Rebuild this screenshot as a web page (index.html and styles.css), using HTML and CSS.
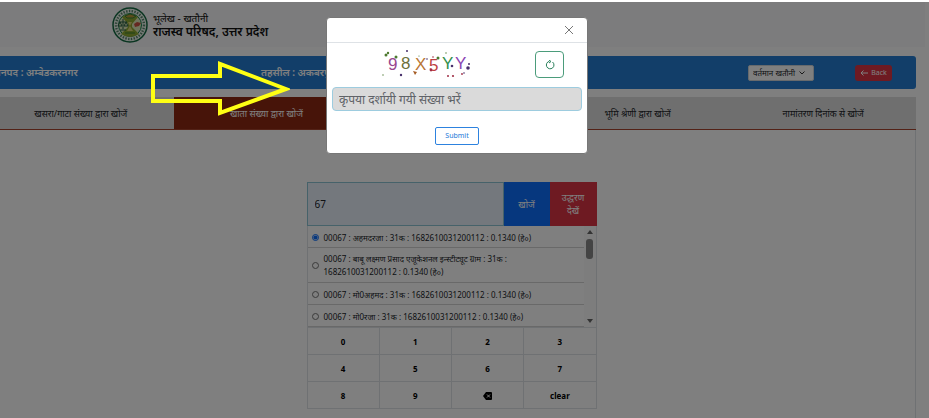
FILE: index.html
```html
<!DOCTYPE html>
<html lang="hi">
<head>
<meta charset="utf-8">
<meta name="viewport" content="width=device-width, initial-scale=1">
<title>भूलेख - खतौनी</title>
<link rel="stylesheet" href="styles.css">
</head>
<body>
<header class="site-header">
  <svg class="emblem" viewBox="0 0 36 36" aria-hidden="true">
    <circle cx="18" cy="18" r="17" fill="#eef5ee" stroke="#146a42" stroke-width="1.5"/>
    <circle cx="18" cy="18" r="14" fill="none" stroke="#55876a" stroke-width="2.4" stroke-dasharray="1.4 1.4"/>
    <circle cx="18" cy="18" r="11.5" fill="#dfe9b8" stroke="#168052"/>
    <path d="M10 10Q18 4 26 10L20 17V20L27 27Q18 33 9 27L16 20V17Z" fill="#8faa32"/>
    <path d="M13 9L18 7L24 9L21 11H15ZM13 26H23" fill="#bb9938" stroke="#3d8135"/>
    <path d="M7 15H15M11 12V22M8 15L6 19H10ZM14 15L12 19H16ZM8 23H14" fill="none" stroke="#255d42"/>
    <path d="M22 17L25 15L29 16L27 19L23 20Z" fill="#cc5143"/>
    <path d="M16 15H20L18 19L21 24H15L18 19Z" fill="#ded578"/>
  </svg>
  <div>
    <p class="site-name">भूलेख - खतौनी</p>
    <h1 class="site-title">राजस्व परिषद, उत्तर प्रदेश</h1>
  </div>
</header>
<main class="page">
  <div class="location-bar">
    <span class="place">जनपद : अम्बेडकरनगर</span>
    <span class="place">तहसील : अकबरपुर</span>
    <div class="bar-cell">
      <select class="version" aria-label="खतौनी"><option>वर्तमान खतौनी</option></select>
    </div>
    <button class="back" type="button">
      <svg class="back-icon" viewBox="0 0 8 8" aria-hidden="true"><path d="M8 4H1M3.5 1.5L1 4L3.5 6.5"/></svg>Back
    </button>
  </div>
  <nav class="tabs">
    <a class="tab" href="#">खसरा/गाटा संख्या द्वारा खोजें</a>
    <a class="tab active" href="#">खाता संख्या द्वारा खोजें</a>
    <a class="tab" href="#">खातेदार के नाम द्वारा खोजें</a>
    <a class="tab" href="#">भूमि श्रेणी द्वारा खोजें</a>
    <a class="tab" href="#">नामांतरण दिनांक से खोजें</a>
  </nav>
  <section class="panel">
    <div class="finder">
      <div class="search">
        <input class="number" type="text" value="67" aria-label="खाता संख्या">
        <button class="find" type="button">खोजें</button>
        <button class="extract" type="button">उद्धरण देखें</button>
      </div>
      <div class="results">
        <div class="options">
          <label class="option"><input type="radio" name="khata" checked><span>00067 : अहमदरजा : 31क : 1682610031200112 : 0.1340 (हे०)</span></label>
          <label class="option"><input type="radio" name="khata"><span>00067 : बाबू लक्ष्मण प्रसाद एजूकेशनल इन्स्टीट्यूट ग्राम : 31क : 1682610031200112 : 0.1340 (हे०)</span></label>
          <label class="option"><input type="radio" name="khata"><span>00067 : मो0अहमद : 31क : 1682610031200112 : 0.1340 (हे०)</span></label>
          <label class="option"><input type="radio" name="khata"><span>00067 : मो0रजा : 31क : 1682610031200112 : 0.1340 (हे०)</span></label>
        </div>
        <div class="scrollbar" aria-hidden="true"><i class="up"></i><i class="thumb"></i><i class="down"></i></div>
      </div>
      <div class="keypad">
        <button type="button">0</button><button type="button">1</button><button type="button">2</button><button type="button">3</button>
        <button type="button">4</button><button type="button">5</button><button type="button">6</button><button type="button">7</button>
        <button type="button">8</button><button type="button">9</button>
        <button type="button" aria-label="backspace"><svg class="erase" viewBox="0 0 9 8" aria-hidden="true"><path d="M3 0H8Q9 0 9 1V7Q9 8 8 8H3L0 4Z"/><path class="cross" d="M4 2.5L7 5.5M7 2.5L4 5.5"/></svg></button>
        <button type="button">clear</button>
      </div>
    </div>
  </section>
</main>
<div class="backdrop">
  <form class="modal" role="dialog" aria-label="Captcha">
    <div class="modal-head">
      <button class="close" type="button" aria-label="Close"><svg viewBox="0 0 10 10"><path d="M1 1L9 9M9 1L1 9"/></svg></button>
    </div>
    <div class="modal-body">
      <div class="captcha-row">
        <svg class="captcha" viewBox="0 0 90 30" role="img" aria-label="98X5YY">
          <g class="glyphs">
            <text x="6" y="21" fill="#98478f">9</text><text x="19" y="20" fill="#6d713b">8</text><text x="33" y="21" fill="#ba7634">X</text><text x="47" y="22" fill="#bd3f42">5</text><text x="60" y="20" fill="#34914d">Y</text><text x="73" y="20" fill="#8b45b4">Y</text>
          </g>
          <g fill="#4d792f"><circle cx="4" cy="6" r="1.5"/><circle cx="6" cy="4" r="1.2"/><circle cx="14" cy="8" r="1.5"/><circle cx="56" cy="9" r="1.5"/><circle cx="64" cy="4" r=".7"/><circle cx="1" cy="26" r=".7"/><circle cx="37" cy="7" r=".6"/></g>
          <g fill="#47306b"><circle cx="25" cy="2" r="1"/><circle cx="19" cy="26" r="1.2"/><circle cx="70" cy="17" r="1.3"/><circle cx="87" cy="15" r="1"/><circle cx="86" cy="19" r="1.8"/><circle cx="82" cy="24" r=".8"/><circle cx="45" cy="10" r=".8"/></g>
          <g fill="#a02f46"><circle cx="49" cy="21" r="1.4"/><circle cx="66" cy="27" r="1"/><circle cx="71" cy="27" r="1.1"/><circle cx="80" cy="25" r=".9"/><circle cx="51" cy="8" r=".8"/></g>
          <path d="M31 22L35 23L33 26Z" fill="#a55c24"/>
        </svg>
        <button class="refresh" type="button" aria-label="Refresh"><svg viewBox="0 0 10 10"><path d="M7.500 2A3.800 3.800 0 1 1 4.300 1.300M4 0L6 1.500L4 3"/></svg></button>
      </div>
      <input class="answer" type="text" placeholder="कृपया दर्शायी गयी संख्या भरें" aria-label="कृपया दर्शायी गयी संख्या भरें">
      <button class="submit" type="button">Submit</button>
    </div>
  </form>
</div>
<svg class="pointer" viewBox="0 0 140 56" aria-hidden="true"><path d="M3 15H70V3L136 28L70 52V40H3Z"/></svg>
</body>
</html>
```
FILE: styles.css
```css
* { box-sizing: border-box; }
body {
  margin: 0;
  padding-top: 2px;
  min-height: 100vh;
  display: flex;
  flex-direction: column;
  overflow: hidden;
  background: #fff;
  color: #212529;
  font: 9px/13px "Noto Sans", "Noto Sans Devanagari", sans-serif;
}
button, input, select { font: inherit; color: inherit; margin: 0; }
button { padding: 0; }
.site-header {
  display: flex;
  align-items: center;
  gap: 5px;
  height: 45px;
  margin-right: 4px;
  padding-left: 112px;
  background: #f8f8fa;
}
.emblem { width: 36px; height: 36px; }
.site-name, .site-title { margin: 0; color: #111; font-size: 10px; line-height: 13px; }
.site-title { font-size: 12px; font-weight: 600; }
.page {
  flex: 1;
  display: flex;
  flex-direction: column;
  margin: 9px 13px 0 -12px;
}
.location-bar {
  display: grid;
  grid-template-columns: 268px 1fr 107px 61px;
  align-items: center;
  height: 33px;
  padding-left: 5px;
  border-radius: 3px;
  background: #247dd2;
  color: #fff;
}
.place { font-size: 10px; font-weight: 600; }
.version {
  display: block;
  width: 66px;
  height: 16px;
  padding: 0 4px;
  border: 1px solid #ced4da;
  border-radius: 2px;
  appearance: none;
  background: #fff url("data:image/svg+xml,%3Csvg xmlns='http://www.w3.org/2000/svg' viewBox='0 0 6 4'%3E%3Cpath d='M.5.5L3 3L5.500.5' fill='none' stroke='%23333'/%3E%3C/svg%3E") right 8px center / 6px 4px no-repeat;
  color: #212529;
  font-size: 8px;
}
.back {
  display: flex;
  align-items: center;
  justify-content: center;
  justify-self: start;
  gap: 3px;
  width: 37px;
  height: 16px;
  border: 0;
  border-radius: 3px;
  background: #dc3545;
  font-size: 7px;
}
.back-icon { width: 8px; height: 8px; fill: none; stroke: #fff; }
.tabs {
  display: grid;
  grid-template-columns: repeat(5, 1fr);
  height: 33px;
  margin-top: 8px;
  border-bottom: 1px solid #a7452e;
  background: #dedede;
}
.tab {
  display: flex;
  align-items: center;
  justify-content: center;
  color: #212529;
  text-decoration: none;
  white-space: nowrap;
}
.tab.active { background: #8f2812; color: #fff; }
.panel {
  flex: 1;
  display: flex;
  justify-content: center;
  align-items: flex-start;
  padding: 52px 0 10px;
  border-right: 1px solid #dee2e6;
}
.finder { width: 290px; }
.search { display: grid; grid-template-columns: 1fr 46px 47px; height: 44px; }
.number {
  min-width: 0;
  padding: 0 7px;
  border: 1px solid #8cc4d4;
  background: #e8f0fa;
  font-size: 10px;
}
.find, .extract { border: 0; background: #0d6efd; color: #fff; }
.extract { padding: 0 8px; background: #dc3545; }
.results {
  display: flex;
  height: 101px;
  border: solid #dee2e6;
  border-width: 0 1px;
}
.options { flex: 1; min-width: 0; font-size: 8px; }
.option {
  display: flex;
  align-items: center;
  gap: 5px;
  min-height: 22px;
  padding: 4px 46px 3px 4px;
  border-bottom: 1px solid #d3d3d3;
}
.option:nth-child(2) { padding-bottom: 4px; }
.option input { flex: none; width: 7px; height: 7px; accent-color: #0d6efd; }
.scrollbar {
  display: flex;
  flex-direction: column;
  align-items: center;
  width: 12px;
  padding: 4px 0;
  background: #fafafa;
}
.up, .down { border: solid transparent; border-width: 0 3px; }
.up { border-bottom: 4px solid #666; }
.down { margin-top: auto; border-top: 4px solid #666; }
.thumb { width: 7px; height: 20px; margin-top: 5px; border-radius: 3px; background: #888; }
.keypad {
  display: grid;
  grid-template-columns: repeat(4, 1fr);
  border: solid #dee2e6;
  border-width: 1px 0 0 1px;
}
.keypad button {
  height: 27px;
  border: solid #dee2e6;
  border-width: 0 1px 1px 0;
  background: #fff;
  color: #000;
  font-size: 8px;
  font-weight: 700;
}
.erase { width: 9px; height: 8px; vertical-align: middle; }
.erase .cross { stroke: #fff; }
.backdrop {
  position: fixed;
  inset: 2px 0 0;
  display: flex;
  justify-content: center;
  align-items: flex-start;
  padding: 15px 15px 0 0;
  background: rgba(0, 0, 0, .5);
}
.modal {
  width: 262px;
  border: 1px solid #777;
  border-radius: 4px;
  background: #fff;
}
.modal-head {
  display: flex;
  justify-content: flex-end;
  align-items: center;
  height: 25px;
  padding-right: 13px;
  border-bottom: 1px solid #dee2e6;
}
.close { display: flex; border: 0; background: none; }
.close svg { width: 10px; height: 10px; stroke: #777; }
.modal-body { padding: 8px 5px; }
.captcha-row { display: flex; justify-content: flex-end; align-items: flex-start; padding-right: 18px; gap: 63px; }
.captcha { width: 90px; height: 30px; margin-top: -2px; }
.glyphs { font: 17px "Liberation Sans", sans-serif; }
.refresh {
  display: flex;
  justify-content: center;
  align-items: center;
  width: 29px;
  height: 27px;
  border: 1px solid #4b9c7b;
  border-radius: 4px;
  background: #fff;
}
.refresh svg { width: 10px; height: 10px; fill: none; stroke: #287f5a; }
.answer {
  display: block;
  width: 100%;
  height: 24px;
  margin-top: 8px;
  padding: 0 6px;
  border: 1px solid #9dccdf;
  border-radius: 4px;
  background: #dadada;
  font-size: 12px;
}
.answer::placeholder { color: #5f6368; opacity: 1; }
.submit {
  display: block;
  width: 44px;
  height: 18px;
  margin: 16px auto 0;
  border: 1px solid #2d82df;
  border-radius: 2px;
  background: #fff;
  color: #2478d8;
  font-size: 7px;
  line-height: 14px;
}
.pointer {
  position: fixed;
  top: 61px;
  left: 150px;
  width: 140px;
  height: 56px;
  fill: none;
  stroke: #ffff14;
  stroke-width: 4px;
}
```
